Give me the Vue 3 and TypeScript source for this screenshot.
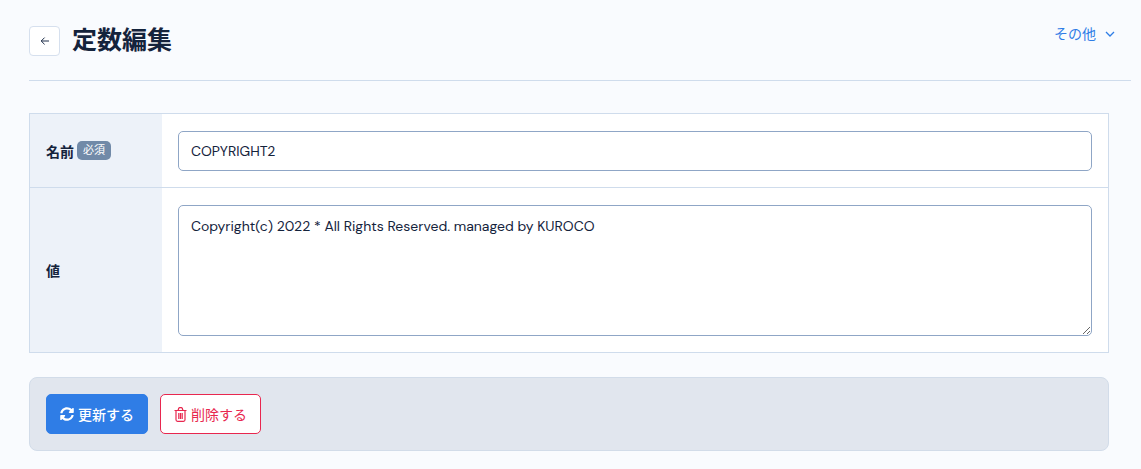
<script setup lang="ts">
import { ref } from 'vue'
const name = ref('COPYRIGHT2')
const value = ref('Copyright(c) 2022 * All Rights Reserved. managed by KUROCO')
</script>

<template>
  <div class="page">
    <header class="head">
      <div class="head-left">
        <button class="back" type="button" aria-label="戻る">
          <svg width="10" height="10" viewBox="0 0 10 10" fill="none" stroke="#1f2f4a" stroke-width="1">
            <path d="M9 5H1.2M4.6 1.6 1.2 5l3.4 3.4" />
          </svg>
        </button>
        <h1 class="title">定数編集</h1>
      </div>
      <a class="other">その他
        <svg width="10" height="6" viewBox="0 0 10 6" fill="none" stroke="#2f7de6" stroke-width="1.3">
          <path d="M1 1l4 4 4-4" />
        </svg>
      </a>
    </header>

    <div class="table">
      <div class="row row-name">
        <div class="label">名前<span class="req">必須</span></div>
        <div class="cell"><input v-model="name" class="input" type="text" /></div>
      </div>
      <div class="row">
        <div class="label">値</div>
        <div class="cell"><textarea v-model="value" class="input area"></textarea></div>
      </div>
    </div>

    <div class="actions">
      <button class="btn primary" type="button">
        <svg width="14" height="14" viewBox="0 0 512 512" fill="#fff">
          <path d="M370.7 133.3C339.5 104 298.900 88 255.800 88c-77.500.1-144.300 53.200-162.800 126.900-1.300 5.400-6.100 9.100-11.600 9.100H24.100c-7.500 0-13.200-6.800-11.800-14.200C33.900 94.900 134.800 8 256 8c66.400 0 126.800 26.100 171.300 68.700L463 41c15.100-15.100 41-4.400 41 17v134c0 13.300-10.700 24-24 24H346c-21.400 0-32.100-25.900-17-41l41.700-41.700zM32 296h134c21.400 0 32.100 25.900 17 41l-41.700 41.700c31.200 29.300 71.800 45.300 114.900 45.300 77.400-.1 144.300-53.100 162.800-126.800 1.300-5.400 6.100-9.100 11.600-9.100h57.300c7.500 0 13.200 6.800 11.800 14.200C478.100 417.100 377.200 504 256 504c-66.400 0-126.800-26.100-171.300-68.700L49 471c-15.100 15.100-41 4.400-41-17V320c0-13.300 10.700-24 24-24z" />
        </svg>
        更新する
      </button>
      <button class="btn danger" type="button">
        <svg width="13" height="15" viewBox="0 0 13 15" fill="none" stroke="#e8274f" stroke-width="1.2">
          <path d="M.5 3.500h12M2 3.500v9.300c0 .9.600 1.500 1.500 1.500h6c.9 0 1.500-.6 1.500-1.500V3.500M4 3.500l.8-2.200c.1-.4.400-.6.800-.6h1.800c.4 0 .7.200.8.600L9 3.500M4.800 6v6M6.500 6v6M8.200 6v6" />
        </svg>
        削除する
      </button>
    </div>
  </div>
</template>

<style>
html, body { margin: 0; background: #f9fbfe; }
</style>

<style scoped>
.page {
  padding: 0 10px 0 29px;
  font-family: "DM Sans", Inter, "Noto Sans CJK JP", sans-serif;
  color: #14233c;
  font-size: 14px;
}
.head {
  display: flex;
  justify-content: space-between;
  align-items: flex-start;
  height: 80px;
  border-bottom: 1px solid #cfdcec;
}
.head-left { display: flex; align-items: center; gap: 12px; padding-top: 26px; }
.back {
  width: 31px;
  height: 30px;
  padding: 0;
  display: flex;
  align-items: center;
  justify-content: center;
  background: #fff;
  border: 1px solid #d6e0ee;
  border-radius: 4px;
}
.title {
  margin: 0;
  font-size: 25px;
  line-height: 30px;
  font-weight: 700;
  color: #14233c;
}
.other {
  display: flex;
  align-items: center;
  gap: 9px;
  margin: 24px 16px 0 0;
  line-height: 20px;
  color: #2f7de6;
}
.table {
  width: 1080px;
  margin-top: 32px;
  box-sizing: border-box;
  border: 1px solid #cfdcec;
  background: #fff;
}
.row { display: flex; height: 164px; }
.row-name { height: 73px; border-bottom: 1px solid #cfdcec; }
.label {
  width: 132px;
  flex: none;
  box-sizing: border-box;
  display: flex;
  align-items: center;
  gap: 3px;
  padding-left: 16px;
  background: #edf2f9;
  font-weight: 700;
}
.req {
  display: inline-block;
  padding: 0 6px;
  height: 19px;
  line-height: 19px;
  border-radius: 5px;
  background: #718aa8;
  color: #fff;
  font-size: 11px;
  font-weight: 400;
}
.cell {
  flex: 1;
  display: flex;
  align-items: center;
  padding: 0 16px;
}
.input {
  display: block;
  width: 100%;
  height: 40px;
  box-sizing: border-box;
  padding: 0 12px;
  border: 1px solid #8fa6c6;
  border-radius: 5px;
  background: #fff;
  color: #14233c;
  font: inherit;
  outline: none;
}
.area {
  height: 131px;
  padding: 10px 12px;
  line-height: 20px;
  resize: vertical;
}
.actions {
  display: flex;
  gap: 12px;
  width: 1080px;
  box-sizing: border-box;
  margin-top: 24px;
  padding: 16px;
  background: #e1e6ee;
  border: 1px solid #d2dce9;
  border-radius: 8px;
}
.btn {
  display: flex;
  align-items: center;
  gap: 4px;
  height: 40px;
  box-sizing: border-box;
  border-radius: 5px;
  font: inherit;
  padding: 0 13px;
}
.primary { background: #2f7de6; border: 1px solid #2f7de6; color: #fff; font-weight: 500; }
.danger { background: #fff; border: 1px solid #e8274f; color: #e8274f; }
</style>
